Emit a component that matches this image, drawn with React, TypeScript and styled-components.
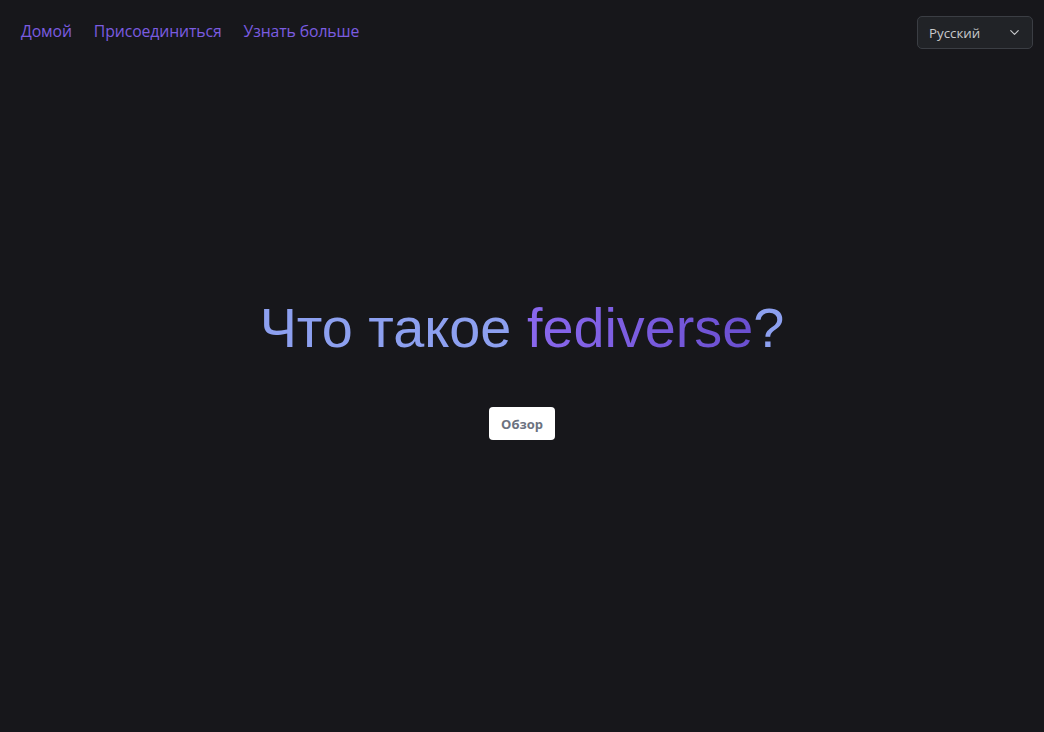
import React from "react";
import styled, { createGlobalStyle } from "styled-components";

const Global = createGlobalStyle`
  html, body { margin: 0; padding: 0; background: #17171b; }
  body { font-family: "Open Sans", "Noto Sans", sans-serif; }
  * { box-sizing: border-box; }
`;

const Page = styled.div`
  min-height: 732px;
  display: flex;
  flex-direction: column;
  background: #17171b;
`;

const Header = styled.header`
  display: flex;
  justify-content: space-between;
  align-items: flex-start;
  padding: 16px 11px 0 21px;
`;

const Nav = styled.nav`
  display: flex;
  gap: 22px;
  padding-top: 4px;
`;

const NavLink = styled.a`
  font-family: "Open Sans", "Noto Sans", sans-serif;
  font-size: 15.8px;
  letter-spacing: -0.12px;
  line-height: 22px;
  color: #7b5ce0;
  text-decoration: none;
  cursor: pointer;
`;

const Select = styled.div`
  width: 116px;
  height: 33px;
  display: flex;
  align-items: center;
  justify-content: space-between;
  padding: 0 10px 0 11px;
  background: #212327;
  border: 1px solid #3b3e44;
  border-radius: 5px;
  color: #c8c9cc;
  font-size: 13.3px;
  font-family: "Open Sans", "Noto Sans", sans-serif;
`;

const Hero = styled.main`
  flex: 1;
  display: flex;
  flex-direction: column;
  align-items: center;
  padding-top: 244px;
`;

const Title = styled.h1`
  margin: 0;
  font-family: "Liberation Sans", Arial, sans-serif;
  font-weight: 400;
  font-size: 55.8px;
  line-height: 70px;
  color: #8da0f0;
`;

const Accent = styled.span`
  background: linear-gradient(90deg, #8a68ee 0%, #6a4fcf 100%);
  -webkit-background-clip: text;
  background-clip: text;
  color: transparent;
`;

const Button = styled.button`
  margin-top: 44px;
  height: 33px;
  padding: 0 12px;
  background: #ffffff;
  border: none;
  border-radius: 4px;
  color: #6b7280;
  font-family: "Open Sans", "Noto Sans", sans-serif;
  font-weight: 700;
  font-size: 13px;
  cursor: pointer;
`;

const Chevron = () => (
  <svg width="15" height="15" viewBox="0 0 24 24" fill="none" stroke="#c8c9cc" strokeWidth="1.8" strokeLinecap="round" strokeLinejoin="round">
    <path d="M6 9l6 6 6-6" />
  </svg>
);

export default function App() {
  return (
    <Page>
      <Global />
      <Header>
        <Nav>
          <NavLink>Домой</NavLink>
          <NavLink>Присоединиться</NavLink>
          <NavLink>Узнать больше</NavLink>
        </Nav>
        <Select>
          <span>Русский</span>
          <Chevron />
        </Select>
      </Header>
      <Hero>
        <Title>
          Что такое <Accent>fediverse</Accent>?
        </Title>
        <Button>Обзор</Button>
      </Hero>
    </Page>
  );
}
